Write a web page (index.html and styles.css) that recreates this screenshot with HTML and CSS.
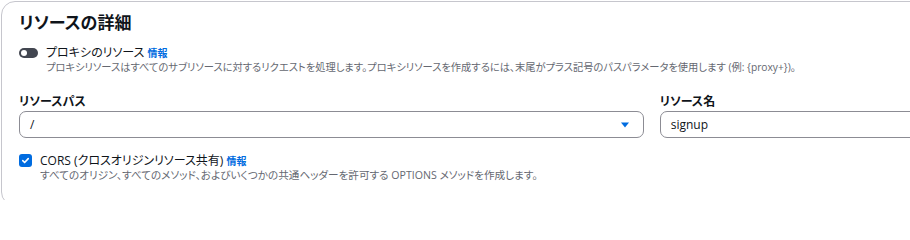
FILE: index.html
```html
<!DOCTYPE html>
<html lang="ja">
<head>
<meta charset="utf-8">
<link rel="stylesheet" href="styles.css">
</head>
<body>
<section class="card">
  <h2 class="title">リソースの詳細</h2>

  <div class="option">
    <span class="toggle"><span class="knob"></span></span>
    <div class="option-text">
      <div class="option-label">プロキシのリソース <a class="info">情報</a></div>
      <div class="desc">プロキシリソースはすべてのサブリソースに対するリクエストを処理します。プロキシリソースを作成するには、末尾がプラス記号のパスパラメータを使用します (例: {proxy+})。</div>
    </div>
  </div>

  <div class="fields">
    <div class="field">
      <label class="field-label">リソースパス</label>
      <div class="select">
        <span class="value">/</span>
        <svg class="caret" width="10" height="8" viewBox="0 0 10 8"><path d="M1 1.5h8L5 6.5z" fill="#006ce0"/></svg>
      </div>
    </div>
    <div class="field">
      <label class="field-label">リソース名</label>
      <div class="input"><span class="value">signup</span></div>
    </div>
  </div>

  <div class="option cors">
    <span class="checkbox">
      <svg width="14" height="14" viewBox="0 0 14 14"><path d="M3.5 7.2l2.4 2.4 4.6-5" fill="none" stroke="#fff" stroke-width="2" stroke-linecap="round" stroke-linejoin="round"/></svg>
    </span>
    <div class="option-text">
      <div class="option-label">CORS (クロスオリジンリソース共有) <a class="info">情報</a></div>
      <div class="desc desc-wide">すべてのオリジン、すべてのメソッド、およびいくつかの共通ヘッダーを許可する OPTIONS メソッドを作成します。</div>
    </div>
  </div>
</section>
</body>
</html>
```

FILE: styles.css
```css
html, body {
  margin: 0;
  padding: 0;
  background: #ffffff;
  overflow: hidden;
}
body {
  font-family: "Open Sans", "Noto Sans CJK JP", sans-serif;
  font-feature-settings: "palt";
  color: #0f141a;
  width: 910px;
  height: 200px;
}
.card {
  box-sizing: border-box;
  width: 990px;
  margin: 1px 0 0 1px;
  border: 1px solid #c6c6cd;
  border-radius: 14px;
  padding: 8px 18px 23px 17px;
}
.title {
  margin: 0;
  font-size: 17px;
  line-height: 26px;
  font-weight: 700;
  color: #0f141a;
}
.option {
  display: flex;
  align-items: flex-start;
  gap: 8px;
  margin-top: 9px;
}
.toggle {
  flex: none;
  width: 19px;
  height: 10px;
  margin-top: 3px;
  border-radius: 6px;
  background: #424650;
  position: relative;
}
.knob {
  position: absolute;
  left: 2px;
  top: 2px;
  width: 6px;
  height: 6px;
  border-radius: 50%;
  background: #ffffff;
}
.option-label {
  font-size: 12px;
  line-height: 15px;
  color: #0f141a;
}
.info {
  color: #006ce0;
  font-weight: 700;
  font-size: 10px;
}
.desc {
  font-size: 10.25px;
  line-height: 13px;
  color: #656871;
}
.desc-wide {
  font-size: 10.6px;
}
.fields {
  display: grid;
  grid-template-columns: 2fr 1fr;
  column-gap: 16px;
  margin-top: 20px;
}
.field-label {
  display: block;
  font-size: 12px;
  line-height: 16px;
  font-weight: 700;
  margin-bottom: 1px;
}
.select, .input {
  box-sizing: border-box;
  height: 27px;
  border: 1px solid #8c8c94;
  border-radius: 7px;
  display: flex;
  align-items: center;
  padding: 0 10px;
  font-size: 12px;
}
.select {
  justify-content: space-between;
  padding-right: 13px;
}
.value {
  color: #0f141a;
}
.cors {
  margin-top: 15px;
}
.checkbox {
  flex: none;
  width: 13px;
  height: 13px;
  margin-top: 1px;
  border-radius: 3px;
  background: #006ce0;
  display: flex;
  align-items: center;
  justify-content: center;
}
.checkbox svg {
  width: 11px;
  height: 11px;
}
```
